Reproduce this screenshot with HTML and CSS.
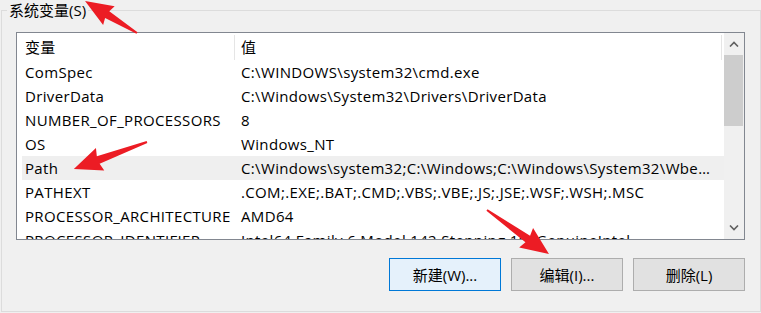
FILE: index.html
```html
<!DOCTYPE html>
<html lang="zh-CN">
<head>
    <meta charset="UTF-8">
    <title>环境变量</title>
    <link rel="stylesheet" href="styles.css">
</head>
<body>

<fieldset class="group">
    <legend class="group-title">系统变量(S)</legend>
    <div class="group-body">
        <div class="listbox">
            <div class="list">
                <div class="list-head">
                    <div class="cell name">变量</div>
                    <div class="cell value">值</div>
                </div>
                <div class="row">
                    <div class="cell name">ComSpec</div>
                    <div class="cell value">C:\WINDOWS\system32\cmd.exe</div>
                </div>
                <div class="row">
                    <div class="cell name">DriverData</div>
                    <div class="cell value">C:\Windows\System32\Drivers\DriverData</div>
                </div>
                <div class="row">
                    <div class="cell name">NUMBER_OF_PROCESSORS</div>
                    <div class="cell value">8</div>
                </div>
                <div class="row">
                    <div class="cell name">OS</div>
                    <div class="cell value">Windows_NT</div>
                </div>
                <div class="row selected">
                    <div class="cell name">Path</div>
                    <div class="cell value">C:\Windows\system32;C:\Windows;C:\Windows\System32\Wbem;C:\Windows\System32\WindowsPowerShell\v1.0\</div>
                </div>
                <div class="row">
                    <div class="cell name">PATHEXT</div>
                    <div class="cell value">.COM;.EXE;.BAT;.CMD;.VBS;.VBE;.JS;.JSE;.WSF;.WSH;.MSC</div>
                </div>
                <div class="row">
                    <div class="cell name">PROCESSOR_ARCHITECTURE</div>
                    <div class="cell value">AMD64</div>
                </div>
                <div class="row">
                    <div class="cell name">PROCESSOR_IDENTIFIER</div>
                    <div class="cell value">Intel64 Family 6 Model 142 Stepping 10, GenuineIntel</div>
                </div>
            </div>
            <div class="scrollbar">
                <div class="scroll-btn">
                    <svg width="10" height="6" viewBox="0 0 10 6"><polyline points="1,5.5 5,1.5 9,5.5" fill="none" stroke="#606060" stroke-width="1.6"/></svg>
                </div>
                <div class="scroll-track">
                    <div class="scroll-thumb"></div>
                </div>
                <div class="scroll-btn">
                    <svg width="10" height="6" viewBox="0 0 10 6"><polyline points="1,0.5 5,4.5 9,0.5" fill="none" stroke="#606060" stroke-width="1.6"/></svg>
                </div>
            </div>
        </div>

        <div class="buttons">
            <button class="btn default">新建(W)...</button>
            <button class="btn">编辑(I)...</button>
            <button class="btn">删除(L)</button>
        </div>
    </div>
</fieldset>

<!-- 标注箭头 -->
<svg class="marks" width="761" height="313" viewBox="0 0 761 313">
    <g transform="translate(137,33) rotate(-148.4)">
        <polygon points="0,-1 35,-4 33,-11 61,0 33,11 35,4 0,1" />
    </g>
    <g transform="translate(147,142) rotate(159.7)">
        <polygon points="0,-1 52,-4 50,-12 78,0 50,12 52,4 0,1" />
    </g>
    <g transform="translate(487,210) rotate(35.4)">
        <polygon points="0,-1 50,-4 48,-12 76,0 48,12 50,4 0,1" />
    </g>
</svg>

</body>
</html>
```

FILE: styles.css
```css
* {
    box-sizing: border-box;
}

body {
    margin: 0;
    width: 761px;
    height: 313px;
    overflow: hidden;
    background: #F0F0F0;
    font-family: 'Open Sans', 'Noto Sans CJK SC', sans-serif;
    font-size: 15px;
    color: #000;
    position: relative;
}

.group {
    margin: 0 0 0 1px;
    padding: 0;
    width: 760px;
    height: 312px;
    border: 1px solid #DCDCDC;
    min-inline-size: 0;
}

.group-title {
    margin-left: 5px;
    padding: 0 2px;
    line-height: 20px;
}

.group-body {
    padding: 12px 15px 0 14px;
}

.listbox {
    display: flex;
    height: 208px;
    background: #FFFFFF;
    border: 1px solid #828790;
}

.list {
    flex: 1;
    min-width: 0;
    overflow: hidden;
    padding-left: 5px;
    letter-spacing: 0.35px;
}

.list-head,
.row {
    display: flex;
    height: 24px;
    line-height: 24px;
}

.list-head {
    height: 27px;
    line-height: 27px;
    width: 700px;
}

.list-head .cell {
    border-right: 1px solid #E5E5E5;
    margin: 2px 0 0;
    line-height: 25px;
}

.cell {
    white-space: nowrap;
    overflow: hidden;
}

.cell.name {
    width: 213px;
    flex-shrink: 0;
    padding-left: 3px;
}

.cell.value {
    flex: 1;
    min-width: 0;
    padding: 0 8px 0 6px;
    text-overflow: ellipsis;
}

.row.selected {
    background: #EFEFEF;
}

.scrollbar {
    width: 20px;
    display: flex;
    flex-direction: column;
    background: #F0F0F0;
}

.scroll-btn {
    height: 22px;
    display: flex;
    align-items: center;
    justify-content: center;
}

.scroll-track {
    flex: 1;
}

.scroll-thumb {
    height: 71px;
    margin: 0 1px 0 0;
    background: #CDCDCD;
}

.buttons {
    display: flex;
    justify-content: flex-end;
    gap: 10px;
    margin-top: 18px;
}

.btn {
    width: 112px;
    height: 33px;
    padding: 0;
    font: inherit;
    color: #000;
    background: #E1E1E1;
    border: 1px solid #ADADAD;
    border-radius: 0;
}

.btn.default {
    background: #E5F1FB;
    border-color: #0078D7;
}

.marks {
    position: absolute;
    left: 0;
    top: 0;
    pointer-events: none;
}

.marks polygon {
    fill: #EC1C24;
}
```
